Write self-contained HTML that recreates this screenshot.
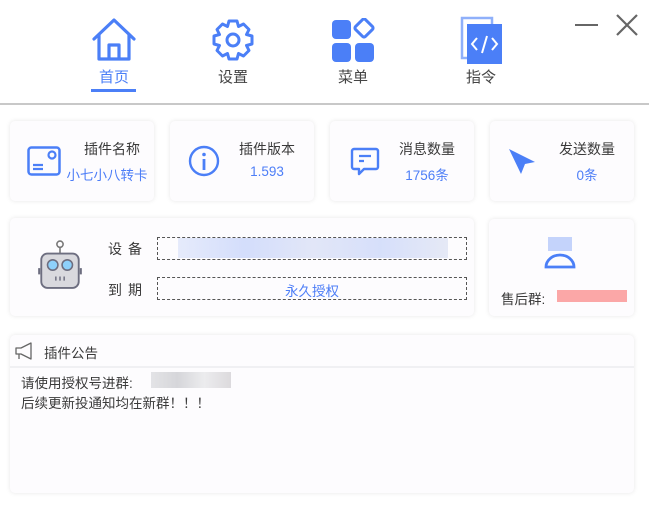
<!DOCTYPE html>
<html><head><meta charset="utf-8"><style>
*{margin:0;padding:0;box-sizing:border-box}
body{width:649px;height:509px;background:#fff;position:relative;overflow:hidden;font-family:"Liberation Sans","Noto Sans CJK SC",sans-serif;color:#3a3a3a}
.a{position:absolute}
.card{position:absolute;background:#fdfcfe;border-radius:5px;box-shadow:0 0 5px rgba(0,0,0,.10)}
.nav{font-size:15px;color:#444;text-align:center;width:60px}
.t1{position:absolute;font-size:14px;color:#3a3a3a;width:90px;text-align:center}
.t2{position:absolute;font-size:13.5px;color:#4d7ef7;width:90px;text-align:center}
.dash{position:absolute;border:1px dashed #555;}
</style></head><body>
<svg class="a" style="left:91px;top:17px" width="46" height="46" viewBox="0 0 46 46"><path d="M3 22 L23 3 L43 22 M8 18 V42 H38 V18 M18 42 V28 H28 V42" fill="none" stroke="#4b7ff7" stroke-width="3.2" stroke-linejoin="round" stroke-linecap="round"/></svg>
<div class="a nav" style="left:84px;top:66px;color:#4b7ff7">首页</div>
<div class="a" style="left:91px;top:89px;width:45px;height:3px;background:#4b7ff7"></div>
<svg class="a" style="left:210px;top:17px" width="46" height="46" viewBox="0 0 46 46"><path d="M19 4h8l1.5 5.5 5-2.5 5.5 5.5-2.5 5 5.5 1.5v8l-5.5 1.5 2.5 5-5.5 5.5-5-2.5L27 42h-8l-1.5-5.5-5 2.5L7 33.5l2.5-5L4 27v-8l5.5-1.5-2.5-5L12.5 7l5 2.5z" fill="none" stroke="#4b7ff7" stroke-width="3" stroke-linejoin="round"/><circle cx="23" cy="23" r="6" fill="none" stroke="#4b7ff7" stroke-width="3"/></svg>
<div class="a nav" style="left:203px;top:66px">设置</div>
<svg class="a" style="left:332px;top:18px" width="44" height="44" viewBox="0 0 44 44"><rect x="0" y="2" width="19" height="19" rx="4" fill="#4b7ff7"/><rect x="25" y="3" width="14" height="14" rx="2" transform="rotate(45 32 10)" fill="none" stroke="#4b7ff7" stroke-width="3"/><rect x="0" y="25" width="19" height="19" rx="4" fill="#4b7ff7"/><rect x="23" y="25" width="19" height="19" rx="4" fill="#4b7ff7"/></svg>
<div class="a nav" style="left:323px;top:66px">菜单</div>
<svg class="a" style="left:460px;top:16px" width="44" height="48" viewBox="0 0 44 48"><rect x="2" y="2" width="30" height="40" fill="none" stroke="#8fb0fa" stroke-width="2.5"/><rect x="7" y="8" width="35" height="40" fill="#4b7ff7"/><path d="M17 22l-5 6 5 6M32 22l5 6-5 6M27 20l-5 17" fill="none" stroke="#fff" stroke-width="2"/></svg>
<div class="a nav" style="left:451px;top:66px">指令</div>
<div class="a" style="left:575px;top:24px;width:23px;height:2px;background:#666"></div>
<svg class="a" style="left:615px;top:13px" width="24" height="24" viewBox="0 0 24 24"><path d="M2 2L22 22M22 2L2 22" stroke="#666" stroke-width="2.2"/></svg>
<div class="a" style="left:0;top:103px;width:649px;height:2px;background:#c8c8c8"></div>

<div class="card" style="left:10px;top:121px;width:144px;height:80px"></div>
<div class="card" style="left:170px;top:121px;width:144px;height:80px"></div>
<div class="card" style="left:330px;top:121px;width:144px;height:80px"></div>
<div class="card" style="left:490px;top:121px;width:144px;height:80px"></div>
<svg class="a" style="left:27px;top:146px" width="34" height="30" viewBox="0 0 34 30"><rect x="1.5" y="1.5" width="31" height="27" rx="3" fill="none" stroke="#4b7ff7" stroke-width="2.5"/><circle cx="25" cy="9" r="3.5" fill="none" stroke="#4b7ff7" stroke-width="2.2"/><path d="M6 19h10M6 23h10" stroke="#4b7ff7" stroke-width="2.2"/></svg>
<div class="t1" style="left:67px;top:139px">插件名称</div>
<div class="t2" style="left:62px;top:164px">小七小八转卡</div>
<svg class="a" style="left:188px;top:145px" width="32" height="32" viewBox="0 0 32 32"><circle cx="16" cy="16" r="14" fill="none" stroke="#4b7ff7" stroke-width="2.4"/><circle cx="16" cy="9.5" r="1.8" fill="#4b7ff7"/><path d="M16 14v11" stroke="#4b7ff7" stroke-width="2.8"/></svg>
<div class="t1" style="left:222px;top:139px">插件版本</div>
<div class="t2" style="left:222px;top:164px">1.593</div>
<svg class="a" style="left:350px;top:147px" width="30" height="30" viewBox="0 0 30 30"><path d="M4 2h22a2 2 0 0 1 2 2v16a2 2 0 0 1-2 2H14l-5 5v-5H4a2 2 0 0 1-2-2V4a2 2 0 0 1 2-2z" fill="none" stroke="#4b7ff7" stroke-width="2.4" stroke-linejoin="round"/><path d="M9 9h12M9 14h5" stroke="#4b7ff7" stroke-width="2.2"/></svg>
<div class="t1" style="left:382px;top:139px">消息数量</div>
<div class="t2" style="left:382px;top:164px">1756条</div>
<svg class="a" style="left:508px;top:148px" width="28" height="28" viewBox="0 0 28 28"><path d="M1 1L27 14 17 16 13 26z" fill="#4b7ff7"/></svg>
<div class="t1" style="left:542px;top:139px">发送数量</div>
<div class="t2" style="left:542px;top:164px">0条</div>

<div class="card" style="left:10px;top:218px;width:464px;height:98px"></div>
<div class="card" style="left:489px;top:219px;width:145px;height:97px"></div>
<svg class="a" style="left:37px;top:239px" width="46" height="52" viewBox="0 0 44 50"><circle cx="22" cy="5" r="3" fill="none" stroke="#777" stroke-width="1.5"/><path d="M22 8v6" stroke="#777" stroke-width="1.5"/><rect x="4" y="14" width="36" height="33" rx="6" fill="#d9d9de" stroke="#6d6e80" stroke-width="1.8"/><path d="M2 28v6M42 28v6" stroke="#6d6e80" stroke-width="2"/><circle cx="15" cy="25" r="5" fill="#8ed1fb" stroke="#6d6e80" stroke-width="1.5"/><circle cx="29" cy="25" r="5" fill="#8ed1fb" stroke="#6d6e80" stroke-width="1.5"/><path d="M18 36v4M22 36v4M26 36v4" stroke="#6d6e80" stroke-width="1.4"/></svg>
<div class="a" style="left:108px;top:239px;font-size:14px;letter-spacing:6px">设备</div>
<div class="a" style="left:108px;top:280px;font-size:14px;letter-spacing:6px">到期</div>
<div class="dash" style="left:157px;top:237px;width:310px;height:23px"></div>
<div class="a" style="left:178px;top:238px;width:270px;height:20px;background:linear-gradient(90deg,#e3e9fb,#cfdafb,#dfe4f7,#d2dcfa,#e3e7f5);opacity:.9"></div>
<div class="dash" style="left:157px;top:277px;width:310px;height:23px"></div>
<div class="a" style="left:157px;top:280px;width:310px;text-align:center;font-size:13.5px;color:#4d7ef7">永久授权</div>
<svg class="a" style="left:543px;top:235px" width="36" height="36" viewBox="0 0 36 36"><rect x="5" y="2" width="24" height="14" fill="#c4d3fb"/><path d="M3 32a14 12 0 0 1 28 0z" fill="none" stroke="#4b7ff7" stroke-width="2.8"/></svg>
<div class="a" style="left:501px;top:288px;font-size:13.5px">售后群:</div>
<div class="a" style="left:557px;top:290px;width:70px;height:12px;background:#fba7a7"></div>

<div class="card" style="left:10px;top:335px;width:624px;height:158px"></div>
<div class="a" style="left:10px;top:366px;width:624px;height:2px;background:#f0f0f3"></div>
<svg class="a" style="left:14px;top:342px" width="22" height="18" viewBox="0 0 22 18"><path d="M2 6h5l10-5v16L7 12H2z M5 12v5" fill="none" stroke="#666" stroke-width="1.3" stroke-linejoin="round"/></svg>
<div class="a" style="left:44px;top:342px;font-size:13.5px">插件公告</div>
<div class="a" style="left:21px;top:372px;font-size:13.5px">请使用授权号进群:</div>
<div class="a" style="left:151px;top:372px;width:80px;height:16px;background:linear-gradient(90deg,#e3e3e6,#d6d6da,#ececee,#dcdadd)"></div>
<div class="a" style="left:21px;top:392px;font-size:13.5px">后续更新投通知均在新群！！！</div>
</body></html>
